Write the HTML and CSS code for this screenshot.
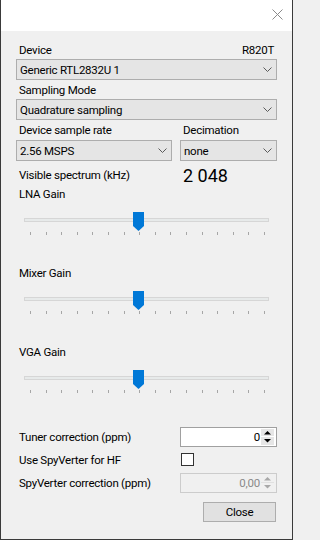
FILE: index.html
```html
<!DOCTYPE html>
<html>
<head>
<meta charset="utf-8">
<link rel="stylesheet" href="styles.css">
</head>
<body>
<div class="window">
  <div class="titlebar">
    <svg class="close-x" width="11" height="11" viewBox="0 0 11 11"><path d="M0.5 0.5 L10.5 10.5 M10.5 0.5 L0.5 10.5" stroke="#8a8a8a" stroke-width="1" fill="none"/></svg>
  </div>
  <div class="content">
    <div class="row-between first">
      <span class="label">Device</span>
      <span class="label tuner">R820T</span>
    </div>
    <div class="combo c1"><span>Generic RTL2832U 1</span><svg class="chev" width="9" height="5" viewBox="0 0 9 5"><polyline points="0.5,0.5 4.5,4.5 8.5,0.5" fill="none" stroke="#5a5a5a" stroke-width="1"/></svg></div>
    <div class="label lbl-gap">Sampling Mode</div>
    <div class="combo c1"><span>Quadrature sampling</span><svg class="chev" width="9" height="5" viewBox="0 0 9 5"><polyline points="0.5,0.5 4.5,4.5 8.5,0.5" fill="none" stroke="#5a5a5a" stroke-width="1"/></svg></div>
    <div class="grid2 lbl-gap">
      <span class="label">Device sample rate</span>
      <span class="label">Decimation</span>
    </div>
    <div class="grid2 combos">
      <div class="combo"><span>2.56 MSPS</span><svg class="chev" width="9" height="5" viewBox="0 0 9 5"><polyline points="0.5,0.5 4.5,4.5 8.5,0.5" fill="none" stroke="#5a5a5a" stroke-width="1"/></svg></div>
      <div class="combo"><span>none</span><svg class="chev" width="9" height="5" viewBox="0 0 9 5"><polyline points="0.5,0.5 4.5,4.5 8.5,0.5" fill="none" stroke="#5a5a5a" stroke-width="1"/></svg></div>
    </div>
    <div class="grid2 visible-row">
      <span class="label vis">Visible spectrum (kHz)</span>
      <span class="bignum">2 048</span>
    </div>

    <div class="label gain-label first-gain">LNA Gain</div>
    <div class="slider">
      <div class="track"></div>
      <svg class="thumb" width="11" height="19" viewBox="0 0 11 19"><path d="M0 0 H11 V14 L5.5 19 L0 14 Z" fill="#0078d7"/></svg>
      <div class="ticks"><i></i><i></i><i></i><i></i><i></i><i></i><i></i><i></i><i></i><i></i><i></i><i></i><i></i><i></i><i></i><i></i></div>
    </div>

    <div class="label gain-label">Mixer Gain</div>
    <div class="slider">
      <div class="track"></div>
      <svg class="thumb" width="11" height="19" viewBox="0 0 11 19"><path d="M0 0 H11 V14 L5.5 19 L0 14 Z" fill="#0078d7"/></svg>
      <div class="ticks"><i></i><i></i><i></i><i></i><i></i><i></i><i></i><i></i><i></i><i></i><i></i><i></i><i></i><i></i><i></i><i></i></div>
    </div>

    <div class="label gain-label">VGA Gain</div>
    <div class="slider">
      <div class="track"></div>
      <svg class="thumb" width="11" height="19" viewBox="0 0 11 19"><path d="M0 0 H11 V14 L5.5 19 L0 14 Z" fill="#0078d7"/></svg>
      <div class="ticks"><i></i><i></i><i></i><i></i><i></i><i></i><i></i><i></i><i></i><i></i><i></i><i></i><i></i><i></i><i></i><i></i></div>
    </div>

    <div class="grid2 form-row tuner-row">
      <span class="label">Tuner correction (ppm)</span>
      <div class="numeric">
        <span class="num-val">0</span>
        <svg class="spin" width="13" height="16" viewBox="0 0 13 16">
          <rect x="0" y="0" width="13" height="16" fill="#e6e6e6"/>
          <line x1="0" y1="7.5" x2="13" y2="7.5" stroke="#ffffff" stroke-width="1"/>
          <path d="M6.5 2 L10 5.5 H3 Z" fill="#000"/>
          <path d="M3 10 H10 L6.5 13.5 Z" fill="#000"/>
        </svg>
      </div>
    </div>
    <div class="grid2 check-row">
      <span class="label">Use SpyVerter for HF</span>
      <span class="checkbox"></span>
    </div>
    <div class="grid2 form-row spy-row">
      <span class="label">SpyVerter correction (ppm)</span>
      <div class="numeric disabled">
        <span class="num-val">0,00</span>
        <svg class="spin" width="13" height="16" viewBox="0 0 13 16">
          <rect x="0" y="0" width="13" height="16" fill="#f0f0f0"/>
          <line x1="0" y1="7.5" x2="13" y2="7.5" stroke="#e0e0e0" stroke-width="1"/>
          <path d="M6.5 2 L10 5.5 H3 Z" fill="#a8a8a8"/>
          <path d="M3 10 H10 L6.5 13.5 Z" fill="#a8a8a8"/>
        </svg>
      </div>
    </div>
    <div class="actions">
      <button class="btn">Close</button>
    </div>
  </div>
</div>
</body>
</html>
```

FILE: styles.css
```css
html, body {
  margin: 0;
  padding: 0;
  background: #f0f0f0;
}
.window {
  width: 293px;
  height: 540px;
  box-sizing: border-box;
  border-left: 1px solid #3a3a3a;
  border-right: 1px solid #3a3a3a;
  border-bottom: 1px solid #3a3a3a;
  background: #f0f0f0;
  font-family: Roboto, "Liberation Sans", sans-serif;
  font-size: 11.5px;
  letter-spacing: -0.25px;
  line-height: 14px;
  color: #000;
  overflow: hidden;
}
.titlebar {
  height: 31px;
  background: #fff;
  display: flex;
  justify-content: flex-end;
  align-items: flex-start;
}
.close-x {
  margin-top: 9px;
  margin-right: 9px;
}
.content {
  padding: 0 15px;
  display: flex;
  flex-direction: column;
}
.label {
  padding-left: 3px;
  height: 14px;
  white-space: nowrap;
}
.row-between {
  display: flex;
  justify-content: space-between;
}
.row-between.first {
  margin-top: 12px;
}
.tuner {
  padding-right: 3px;
}
.combo {
  height: 21px;
  box-sizing: border-box;
  border: 1px solid #adadad;
  background: #e5e5e5;
  display: flex;
  align-items: center;
  justify-content: space-between;
  padding: 0 4px 0 3px;
  white-space: nowrap;
}
.combo.c1 {
  margin-top: 2px;
}
.chev {
  display: block;
}
.lbl-gap {
  margin-top: 3px;
}
.grid2 {
  display: grid;
  grid-template-columns: 156px 97px;
  column-gap: 8px;
}
.combos {
  margin-top: 3px;
}
.visible-row {
  margin-top: 4px;
  height: 21px;
  align-items: start;
}
.vis {
  margin-top: 3px;
}
.bignum {
  font-size: 18px;
  letter-spacing: 0;
  line-height: 21px;
  padding-left: 3px;
  white-space: nowrap;
}
.gain-label {
  margin-top: 30px;
}
.gain-label.first-gain {
  margin-top: 1px;
}
.slider {
  position: relative;
  margin: 11px 8px 0 8px;
  height: 24px;
}
.track {
  position: absolute;
  left: 0;
  right: 0;
  top: 6px;
  height: 4px;
  box-sizing: border-box;
  border: 1px solid #d6d6d6;
  background: #e7eaea;
}
.thumb {
  position: absolute;
  left: 109px;
  top: 0;
  display: block;
}
.ticks {
  position: absolute;
  left: 6px;
  right: 4px;
  top: 20px;
  height: 3px;
  display: flex;
  justify-content: space-between;
}
.ticks i {
  display: block;
  width: 1px;
  height: 3px;
  background: #a6a6a6;
}
.form-row {
  height: 20px;
  align-items: center;
}
.tuner-row {
  margin-top: 33px;
}
.numeric {
  height: 20px;
  box-sizing: border-box;
  border: 1px solid #a0a0a0;
  background: #fff;
  display: flex;
  align-items: center;
  justify-content: flex-end;
  padding-right: 2px;
}
.num-val {
  padding-right: 1px;
}
.spin {
  display: block;
}
.numeric.disabled {
  border-color: #cccccc;
  background: #f0f0f0;
  color: #8a8a8a;
}
.check-row {
  margin-top: 6px;
  height: 14px;
  align-items: start;
}
.checkbox {
  display: block;
  width: 13px;
  height: 13px;
  box-sizing: border-box;
  border: 1px solid #333;
  background: #fff;
  margin-left: 1px;
}
.spy-row {
  margin-top: 6px;
}
.actions {
  display: flex;
  justify-content: flex-end;
  margin-top: 9px;
  padding-right: 1px;
}
.btn {
  width: 73px;
  height: 20px;
  box-sizing: border-box;
  border: 1px solid #adadad;
  background: #e1e1e1;
  font-family: Roboto, "Liberation Sans", sans-serif;
  font-size: 11.5px;
  letter-spacing: -0.25px;
  line-height: 14px;
  color: #000;
  padding: 0;
  margin: 0;
}
```
